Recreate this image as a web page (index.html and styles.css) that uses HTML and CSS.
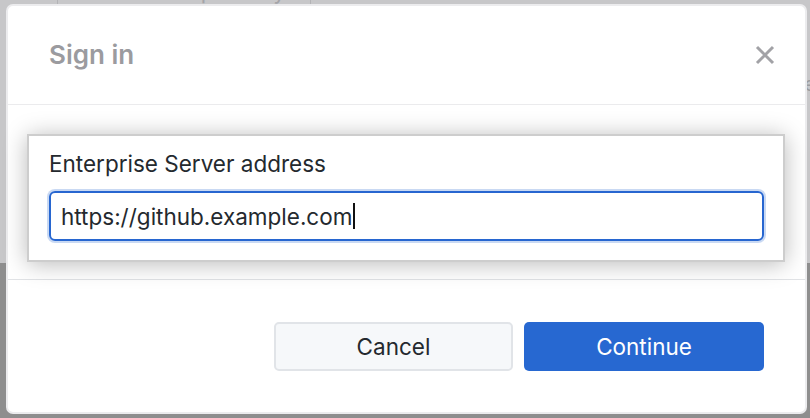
FILE: index.html
```html
<!DOCTYPE html>
<html>
<head>
<meta charset="utf-8">
<link rel="stylesheet" href="styles.css">
</head>
<body>
<div class="backdrop">
  <div class="bg-top">
    <span class="bg-line bg-line-a"></span>
    <span class="bg-text">Publish repository</span>
    <span class="bg-line bg-line-b"></span>
    <span class="bg-letter">e</span>
  </div>
  <div class="bg-bottom"></div>
</div>
<div class="dialog">
  <header class="dialog-header">
    <h1 class="dialog-title">Sign in</h1>
    <button class="close-btn" aria-label="Close">
      <svg width="20" height="20" viewBox="0 0 20 20"><path d="M2 2 L18 18 M18 2 L2 18" stroke="#a2a2a6" stroke-width="3" stroke-linecap="butt" fill="none"/></svg>
    </button>
  </header>
  <section class="dialog-body">
    <div class="card">
      <label class="field-label">Enterprise Server address</label>
      <div class="text-input"><span class="input-value">https://github.example.com</span><span class="caret"></span></div>
    </div>
  </section>
  <footer class="dialog-footer">
    <button class="btn btn-cancel">Cancel</button>
    <button class="btn btn-primary">Continue</button>
  </footer>
</div>
</body>
</html>
```

FILE: styles.css
```css
html, body {
  margin: 0;
  padding: 0;
  width: 810px;
  height: 418px;
  overflow: hidden;
  font-family: Inter, "Liberation Sans", Arial, sans-serif;
}

.backdrop {
  display: flex;
  flex-direction: column;
  height: 418px;
}

.bg-top {
  position: relative;
  height: 263px;
  background: #c7c7c9;
}

.bg-bottom {
  flex: 1;
  background: #8e8e8e;
}

.bg-line {
  position: absolute;
  top: 0;
  width: 1px;
  height: 6px;
  background: #b3b3b6;
}
.bg-line-a { left: 57px; }
.bg-line-b { left: 310px; }

.bg-text {
  position: absolute;
  left: 98px;
  top: -22px;
  font-size: 22px;
  color: #a4a4a8;
}

.bg-letter {
  position: absolute;
  left: 804px;
  top: 72px;
  font-size: 20px;
  color: #9c9ca0;
}

.dialog {
  position: absolute;
  left: 6px;
  top: 4px;
  width: 797px;
  height: 406px;
  background: #ffffff;
  border: 2px solid #ececee;
  border-radius: 7px;
  display: flex;
  flex-direction: column;
}

.dialog-header {
  height: 98px;
  border-bottom: 1px solid #ebebed;
  display: flex;
  align-items: center;
  justify-content: space-between;
  padding: 0 30px 0 41px;
}

.dialog-title {
  margin: 0;
  margin-top: -1px;
  font-size: 26px;
  font-weight: 600;
  color: #9b9b9f;
}

.close-btn {
  border: 0;
  background: none;
  padding: 0;
  width: 20px;
  height: 20px;
  margin-top: 0;
  display: flex;
}

.dialog-body {
  height: 175px;
  border-bottom: 1px solid #e1e3e6;
  padding: 29px 0 0 19px;
  box-sizing: border-box;
}

.card {
  width: 758px;
  height: 128px;
  box-sizing: border-box;
  border: 2px solid #cdcdcd;
  background: #ffffff;
  box-shadow: 0 2px 22px rgba(0, 0, 0, 0.28);
  padding: 15px 19px 0 20px;
  display: flex;
  flex-direction: column;
}

.field-label {
  font-size: 22.5px;
  color: #24292e;
  line-height: 26px;
  height: 26px;
}

.text-input {
  margin-top: 14px;
  height: 50px;
  box-sizing: border-box;
  border: 2px solid #2766d0;
  border-radius: 6px;
  box-shadow: 0 0 0 2px rgba(39, 102, 208, 0.25);
  display: flex;
  align-items: center;
  padding-left: 10px;
}

.input-value {
  font-size: 22.5px;
  color: #24292e;
}

.caret {
  width: 2px;
  height: 26px;
  background: #111;
  margin-left: 1px;
}

.dialog-footer {
  flex: 1;
  display: flex;
  justify-content: flex-end;
  align-items: flex-start;
  gap: 11px;
  padding: 42px 41px 0 0;
}

.btn {
  height: 49px;
  width: 240px;
  border-radius: 5px;
  font-family: Inter, "Liberation Sans", Arial, sans-serif;
  font-size: 22.5px;
  padding: 0;
}

.btn-cancel {
  width: 239px;
  background: #f6f8fa;
  border: 2px solid #e1e4e8;
  color: #24292e;
}

.btn-primary {
  background: #2768d1;
  border: 0;
  color: #ffffff;
}
```
